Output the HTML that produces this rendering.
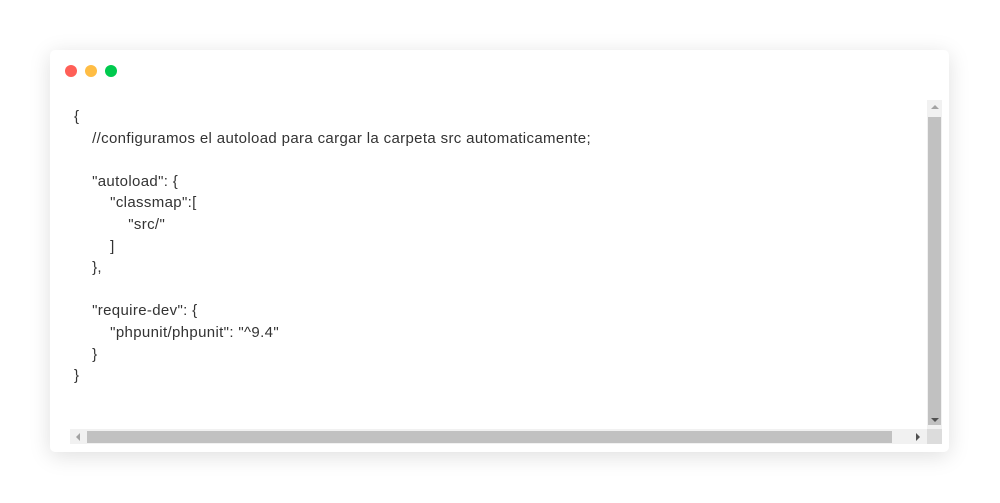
<!DOCTYPE html>
<html><head><style>
body{margin:0;background:#fff;width:1000px;height:503px;overflow:hidden;position:relative;font-family:"Liberation Sans",sans-serif}
.card{position:absolute;left:50px;top:50px;width:899px;height:402px;background:#fff;border-radius:5px;box-shadow:0 4px 22px rgba(0,0,0,0.13)}
.dot{position:absolute;top:15px;width:12px;height:12px;border-radius:50%}
.code{position:absolute;left:24px;top:56px;font-size:15px;letter-spacing:0.35px;line-height:21.6px;color:#333;white-space:pre}
.vs{position:absolute;left:877px;top:50px;width:15px;height:329px;background:#f1f1f1}
.vt{position:absolute;left:878px;top:67px;width:13px;height:308px;background:#c1c1c1}
.hs{position:absolute;left:20px;top:379px;width:857px;height:15px;background:#f1f1f1}
.ht{position:absolute;left:37px;top:381px;width:805px;height:12px;background:#c1c1c1}
.corner{position:absolute;left:877px;top:379px;width:15px;height:15px;background:#dcdcdc}
</style></head><body>
<div class="card">
<div class="dot" style="left:15px;background:#ff5f57"></div>
<div class="dot" style="left:35px;background:#ffbd44"></div>
<div class="dot" style="left:55px;background:#00ca4e"></div>
<div class="code">{
    //configuramos el autoload para cargar la carpeta src automaticamente;

    "autoload": {
        "classmap":[
            "src/"
        ]
    },

    "require-dev": {
        "phpunit/phpunit": "^9.4"
    }
}</div>
<div class="vs"></div><div class="vt"></div>
<div style="position:absolute;left:881px;top:55px;width:0;height:0;border-left:4px solid transparent;border-right:4px solid transparent;border-bottom:4px solid #a3a3a3"></div>
<div style="position:absolute;left:881px;top:368px;width:0;height:0;border-left:4px solid transparent;border-right:4px solid transparent;border-top:4px solid #505050"></div>
<div class="hs"></div><div class="ht"></div>
<div style="position:absolute;left:26px;top:383px;width:0;height:0;border-top:4px solid transparent;border-bottom:4px solid transparent;border-right:4px solid #a3a3a3"></div>
<div style="position:absolute;left:866px;top:383px;width:0;height:0;border-top:4px solid transparent;border-bottom:4px solid transparent;border-left:4px solid #505050"></div>
<div class="corner"></div>
</div>
</body></html>
